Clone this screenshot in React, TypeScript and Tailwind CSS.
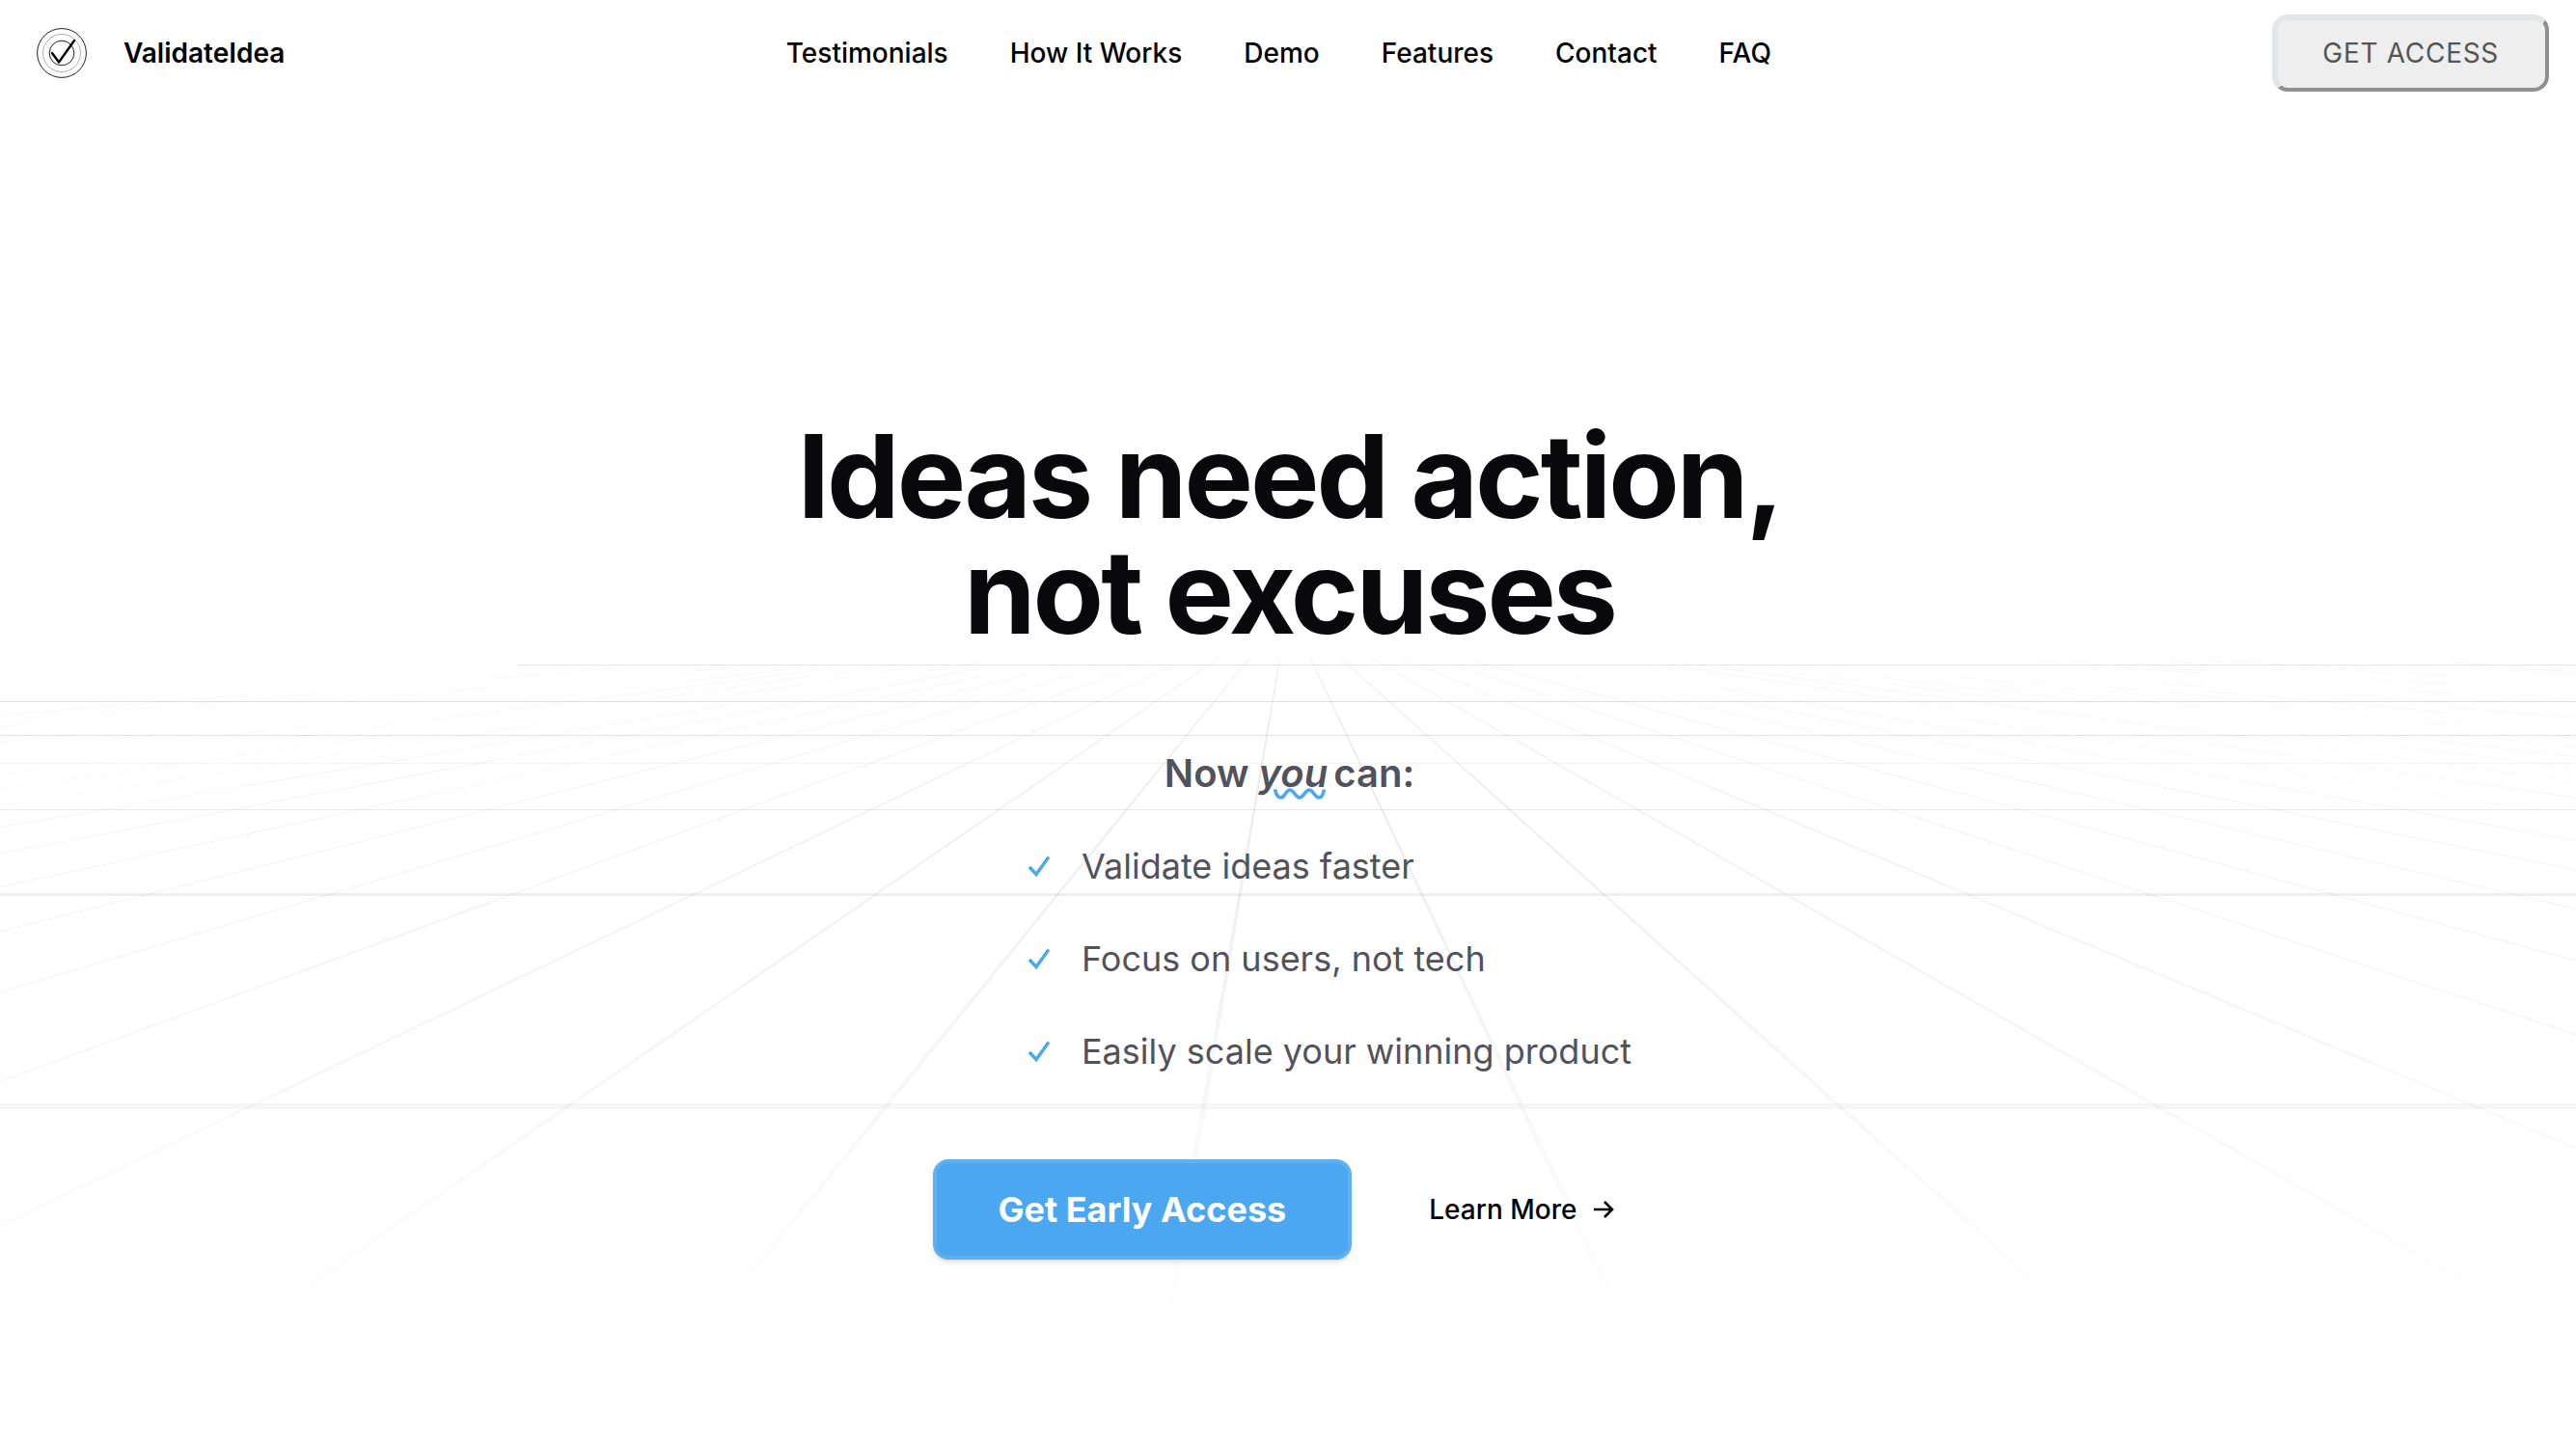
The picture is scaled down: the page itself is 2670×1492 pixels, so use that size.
import React from "react";

const NAV = ["Testimonials", "How It Works", "Demo", "Features", "Contact", "FAQ"];
const BENEFITS = ["Validate ideas faster", "Focus on users, not tech", "Easily scale your winning product"];

const VX = 1335;
const VY = 633;
const TOP = 682;
const BOTTOM = 1390;
const STEP = 0.641;

const ROWS = [
  { y: 689, h: 1, x: 536, o: 0.7 },
  { y: 727, h: 1, x: 0, o: 1 },
  { y: 762, h: 1, x: 0, o: 1 },
  { y: 791, h: 1, x: 0, o: 0.4 },
  { y: 839, h: 1, x: 0, o: 0.9 },
  { y: 926, h: 3, x: 0, o: 0.85 },
  { y: 1144, h: 6, x: 0, o: 1 },
];

const RAYS = Array.from({ length: 62 }, (_, i) => {
  const n = i - 22;
  const s = 0.466 + n * STEP;
  return { n, s, e: s + 0.0107 };
});

function Grid() {
  return (
    <svg
      aria-hidden="true"
      viewBox="0 0 2670 1492"
      preserveAspectRatio="xMidYMid slice"
      className="pointer-events-none absolute inset-0 h-full w-full"
    >
      <defs>
        <linearGradient id="fade" gradientUnits="userSpaceOnUse" x1="0" x2="0" y1={TOP} y2={BOTTOM}>
          <stop offset="0" stopColor="#000" stopOpacity="0.14" />
          <stop offset="0.34" stopColor="#000" stopOpacity="0.075" />
          <stop offset="0.65" stopColor="#000" stopOpacity="0.035" />
          <stop offset="1" stopColor="#000" stopOpacity="0" />
        </linearGradient>
      </defs>
      {ROWS.map((r) => (
        <rect key={r.y} x={r.x} y={r.y} width={2670 - r.x} height={r.h} fill="url(#fade)" opacity={r.o} />
      ))}
      {RAYS.map(({ n, s, e }) => (
        <polygon
          key={n}
          fill="url(#fade)"
          opacity={0.8}
          points={`${VX + s * (TOP - VY)},${TOP} ${VX + e * (TOP - VY)},${TOP} ${VX + e * (BOTTOM - VY)},${BOTTOM} ${VX + s * (BOTTOM - VY)},${BOTTOM}`}
        />
      ))}
    </svg>
  );
}

function Logo() {
  return (
    <svg viewBox="0 0 52 52" className="size-13" fill="none" aria-hidden="true">
      <circle cx="26" cy="26" r="25.4" stroke="#222" strokeWidth="1" />
      <circle cx="26" cy="26" r="19.5" stroke="#999" strokeWidth="0.8" />
      <circle cx="26" cy="26" r="12.8" stroke="#222" strokeWidth="1" />
      <path d="M16 26 L23 35.5 L39 13" stroke="#000" strokeWidth="2.4" strokeLinecap="round" strokeLinejoin="round" />
    </svg>
  );
}

export default function App() {
  return (
    <div className="relative flex min-h-screen flex-col overflow-hidden bg-white font-['Inter',sans-serif] text-black">
      <Grid />
      <header className="relative flex items-center justify-between pt-[15px] pr-7 pl-[38px]">
        <a href="#" className="flex items-center gap-[38px] text-[28px] leading-10 font-semibold">
          <Logo />
          ValidateIdea
        </a>
        <nav className="flex gap-16 text-[28px] leading-10 font-medium">
          {NAV.map((n) => (
            <a key={n} href="#">
              {n}
            </a>
          ))}
        </nav>
        <button className="h-20 rounded-2xl border-t-6 border-r-4 border-b-4 border-l-6 border-t-[#e3e5e6] border-r-[#8f9090] border-b-[#8f9090] border-l-[#e3e5e6] bg-[#eeeeee] pr-12 pb-0.5 pl-[46px] text-[28px] leading-10 tracking-wide text-[#555]">
          GET ACCESS
        </button>
      </header>

      <main className="relative flex flex-col items-center pt-[339px] pl-[3px]">
        <h1 className="text-center text-[120px] leading-none font-bold tracking-tight text-[#09090b]">
          Ideas need action,
          <br />
          not excuses
        </h1>
        <h2 className="mt-[100px] text-[40px] leading-14 font-semibold text-zinc-600">
          Now{" "}
          <em className="relative -mr-1">
            you
            <svg viewBox="0 0 54 12" className="absolute top-10 right-0.5 h-3 w-[54px]" fill="none" aria-hidden="true">
              <path
                d="M1.500 1.500 C3 8 5 10 7.500 10 C12 10 12.500 2 17 2 S22.500 10 27 10 S32.500 2 37 2 S42.500 10 47 10 C49.500 10 51.500 7 52.500 1.500"
                stroke="#4aa8f0"
                strokeWidth="3.6"
              />
            </svg>
          </em>{" "}
          can:
        </h2>
        <ul className="mt-10 flex flex-col gap-10 pl-[83px] text-[36px] leading-14 text-zinc-600">
          {BENEFITS.map((b) => (
            <li key={b} className="flex items-center gap-8">
              <svg viewBox="0 0 24 24" className="size-6" fill="none" aria-hidden="true">
                <path d="M2 13 L9 20.5 L22 2.5" stroke="#4aa8f0" strokeWidth="3.4" />
              </svg>
              {b}
            </li>
          ))}
        </ul>
        <div className="mt-[84px] flex items-center gap-20 pr-8">
          <button className="h-26 rounded-2xl border-4 border-[#5fb0ee] bg-[#4ba8f0] px-16 text-[36px] leading-14 font-bold text-white shadow-md">
            Get Early Access
          </button>
          <a href="#" className="flex items-center gap-4 text-[28px] leading-10 font-medium">
            Learn More
            <svg viewBox="0 0 24 24" className="size-6" fill="none" aria-hidden="true">
              <path d="M2 12 H21 M13 4 L21 12 L13 20" stroke="#000" strokeWidth="2.6" />
            </svg>
          </a>
        </div>
      </main>
    </div>
  );
}
